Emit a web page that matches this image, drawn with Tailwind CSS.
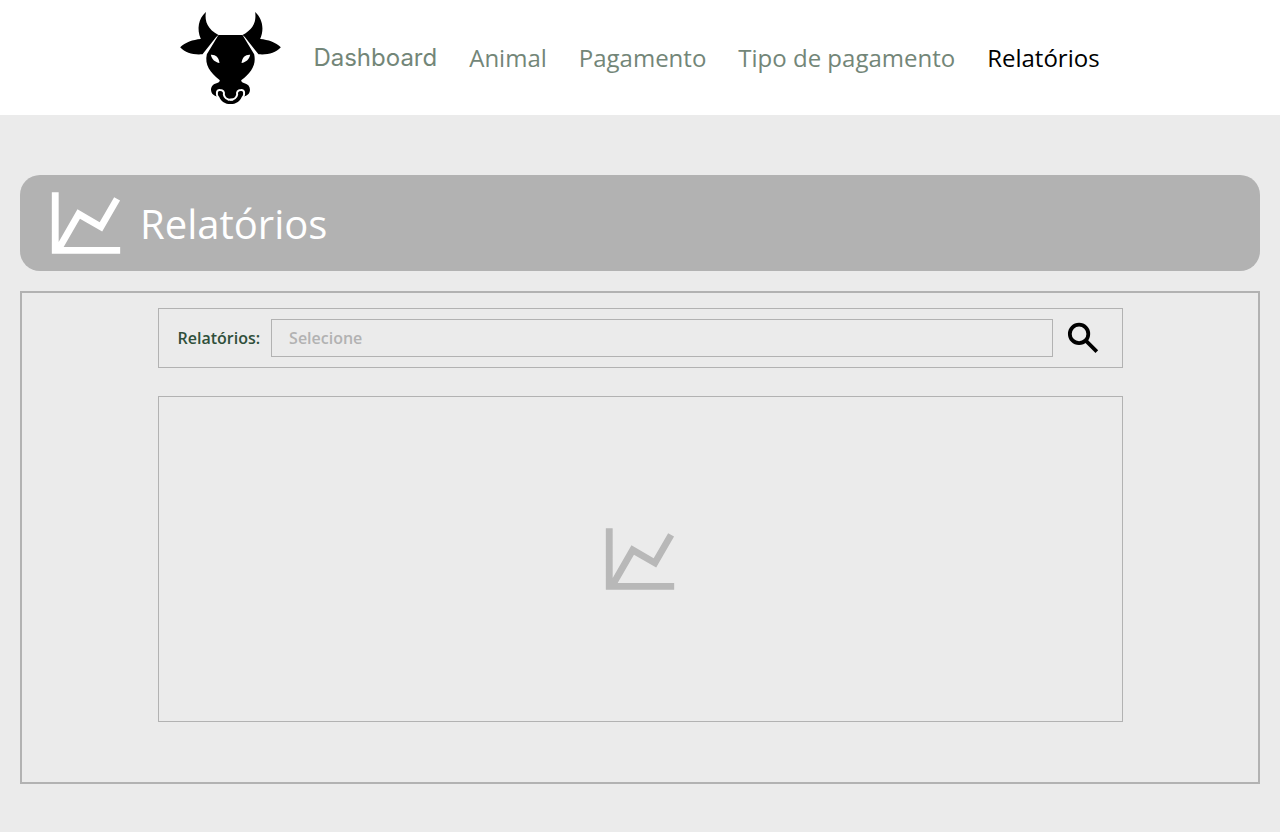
<!DOCTYPE html>
<html lang="pt-BR">
<head>
<meta charset="utf-8">
<meta name="viewport" content="width=device-width, initial-scale=1">
<title>Relatórios</title>
<script src="https://cdn.jsdelivr.net/npm/@tailwindcss/browser@4"></script>
</head>
<body class="flex min-h-screen flex-col bg-[#ebebeb] font-['Open_Sans','Noto_Sans',sans-serif] antialiased">
<header class="bg-white">
  <nav class="flex items-center justify-center gap-8 px-5 pt-[11px] pb-[10px] text-2xl text-[#738678]" aria-label="Principal">
    <a href="#" aria-label="Início">
      <svg class="h-[94px] w-[101px]" viewBox="29 33 302 282" aria-hidden="true">
        <defs>
          <g id="half">
            <path d="M106 36C102 66 112 88 144 105L137 111L96 163C69 165 45 160 29 142C44 127 67 119 91 117C78 87 84 56 106 36Z"/>
            <path d="M186 105H144L109 163C102 195 118 217 148 241C147 247 144 248 138 250C126 253 120 262 122 273C124 284 133 289 146 290C152 305 164 312 180 312H186Z"/>
            <path d="M121 164C135 163 145 171 147 189C134 186 124 179 121 164Z" fill="#fff"/>
            <path d="M143 292C136 281 138 269 149 270C158 270 162 276 160 284C162 294 169 299 181 299" fill="none" stroke="#fff" stroke-width="6"/>
          </g>
        </defs>
        <use href="#half"/>
        <use href="#half" transform="translate(360 0) scale(-1 1)"/>
        <path d="M172 299H188" stroke="#fff" stroke-width="6"/>
      </svg>
    </a>
    <a href="#" class="font-['Inter',sans-serif]">Dashboard</a>
    <a href="#">Animal</a>
    <a href="#">Pagamento</a>
    <a href="#">Tipo de pagamento</a>
    <a href="#" class="text-black" aria-current="page">Relatórios</a>
  </nav>
</header>
<main class="flex flex-1 flex-col gap-5 px-5 pt-[60px] pb-12">
  <div class="flex h-24 items-center gap-[13px] rounded-[20px] bg-[#b2b2b2] px-[25px] text-white">
    <svg class="size-[82px]" viewBox="0 0 24 24" fill="currentColor" aria-hidden="true"><path d="M16 11.78L20.24 4.45L21.97 5.45L16.74 14.5L10.23 10.75L5.46 19H22V21H2V3H4V17.54L9.5 8L16 11.78Z"/></svg>
    <h1 class="pt-[2px] text-[40px] leading-12">Relatórios</h1>
  </div>
  <section class="flex flex-1 flex-col items-center gap-7 border-2 border-[#b2b2b2] px-4 pt-[15px] pb-[60px]">
    <form class="flex h-[60px] w-full max-w-[965px] items-center border border-[#b2b2b2] pr-[18px] pl-[19px] font-semibold">
      <label for="relatorio" class="mr-[11px] text-[#2f4f3a]">Relatórios:</label>
      <select id="relatorio" class="h-[38px] min-w-0 flex-1 appearance-none border border-[#b2b2b2] bg-transparent px-[17px] text-[#b2b2b2]">
        <option>Selecione</option>
      </select>
      <button type="button" class="ml-[10px]" aria-label="Pesquisar">
        <svg class="size-[41px]" viewBox="0 0 24 24" fill="none" stroke="currentColor" stroke-width="2.2" aria-hidden="true"><circle cx="9.4" cy="9.3" r="5.4"/><path d="M13.2 13.1L19.8 19.7"/></svg>
      </button>
    </form>
    <div class="flex w-full max-w-[965px] flex-1 items-center justify-center border border-[#b2b2b2] text-[#b8b8b8]">
      <svg class="size-[82px]" viewBox="0 0 24 24" fill="currentColor" role="img" aria-label="Gráfico"><path d="M16 11.78L20.24 4.45L21.97 5.45L16.74 14.5L10.23 10.75L5.46 19H22V21H2V3H4V17.54L9.5 8L16 11.78Z"/></svg>
    </div>
  </section>
</main>
</body>
</html>
